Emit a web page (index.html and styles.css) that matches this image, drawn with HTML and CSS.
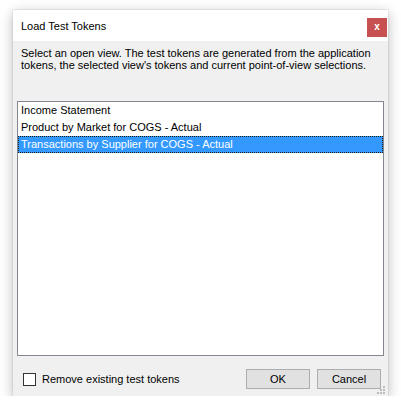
FILE: index.html
```html
<!DOCTYPE html>
<html>
<head>
<meta charset="utf-8">
<link rel="stylesheet" href="styles.css">
</head>
<body>
<div class="dialog">
  <div class="titlebar">
    <div class="title">Load Test Tokens</div>
    <div class="close">x</div>
  </div>
  <div class="desc">Select an open view. The test tokens are generated from the application tokens, the selected view's tokens and current point-of-view selections.</div>
  <div class="list">
    <div class="item">Income Statement</div>
    <div class="item">Product by Market for COGS - Actual</div>
    <div class="item selected">Transactions by Supplier for COGS - Actual</div>
  </div>
  <div class="footer">
    <label class="check"><span class="box"></span><span>Remove existing test tokens</span></label>
    <button class="btn ok">OK</button>
    <button class="btn">Cancel</button>
  </div>
  <svg class="grip" width="10" height="10" viewBox="0 0 10 10">
    <rect x="7" y="1" width="2" height="2" fill="#bcbcbc"/>
    <rect x="4" y="4" width="2" height="2" fill="#bcbcbc"/>
    <rect x="7" y="4" width="2" height="2" fill="#bcbcbc"/>
    <rect x="1" y="7" width="2" height="2" fill="#bcbcbc"/>
    <rect x="4" y="7" width="2" height="2" fill="#bcbcbc"/>
    <rect x="7" y="7" width="2" height="2" fill="#bcbcbc"/>
  </svg>
</div>
</body>
</html>
```
FILE: styles.css
```css
html, body {
  margin: 0;
  padding: 0;
  background: #ffffff;
}
body {
  font-family: "Liberation Sans", Arial, sans-serif;
  font-size: 11px;
  color: #000;
}
.dialog {
  position: relative;
  margin: 10px 0 0 13px;
  width: 375px;
  height: 386px;
  background: #f0f0f0;
  display: flex;
  flex-direction: column;
  box-shadow: 0 0 0 1px rgba(0,0,0,0.05), 0 3px 12px rgba(0,0,0,0.28);
}
.titlebar {
  height: 31px;
  background: #ffffff;
  display: flex;
  justify-content: space-between;
  align-items: flex-start;
  flex: none;
}
.title {
  padding: 10px 0 0 8px;
  line-height: 13px;
}
.close {
  width: 20px;
  height: 19px;
  margin: 8px 1px 0 0;
  background: #c75050;
  color: #fff;
  font-weight: bold;
  font-size: 10px;
  line-height: 18px;
  text-align: center;
}
.desc {
  padding: 6px 8px 0 8px;
  line-height: 12px;
  height: 24px;
  flex: none;
}
.list {
  margin: 30px 4px 0 4px;
  height: 255px;
  box-sizing: border-box;
  border: 1px solid #828790;
  background: #fff;
  flex: none;
}
.item {
  height: 17px;
  line-height: 17px;
  padding-left: 3px;
  white-space: nowrap;
  box-sizing: border-box;
}
.item.selected {
  background: #3399ff;
  color: #fff;
  outline: 1px dotted #1a1a1a;
  outline-offset: -1px;
}
.footer {
  margin-top: 13px;
  height: 20px;
  display: flex;
  align-items: center;
  padding: 0 7px 0 10px;
  flex: none;
}
.check {
  display: flex;
  align-items: center;
  gap: 6px;
  margin-right: auto;
  line-height: 13px;
}
.box {
  width: 13px;
  height: 13px;
  box-sizing: border-box;
  border: 1px solid #333;
  background: #fff;
}
.btn {
  width: 64px;
  height: 20px;
  box-sizing: border-box;
  border: 1px solid #adadad;
  background: #e1e1e1;
  font-family: "Liberation Sans", Arial, sans-serif;
  font-size: 11px;
  color: #000;
  padding: 0;
  margin: 0;
}
.btn.ok {
  margin-right: 7px;
}
.grip {
  position: absolute;
  right: 2px;
  bottom: 1px;
}
```
